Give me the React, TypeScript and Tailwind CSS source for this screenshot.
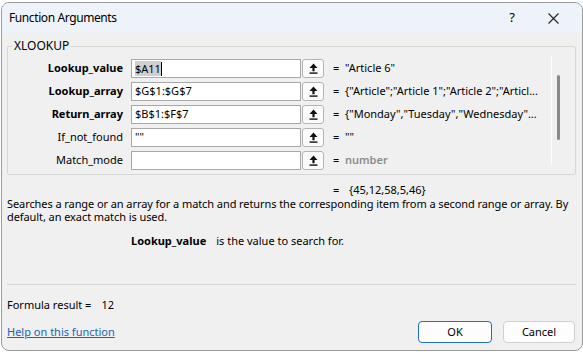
import React from 'react';

type Arg = {
  label: string;
  bold: boolean;
  value: string;
  result: string;
  hint?: boolean;
  selected?: boolean;
};

const args: Arg[] = [
  { label: 'Lookup_value', bold: true, value: '$A11', result: '"Article 6"', selected: true },
  { label: 'Lookup_array', bold: true, value: '$G$1:$G$7', result: '{"Article";"Article 1";"Article 2";"Articl...' },
  { label: 'Return_array', bold: true, value: '$B$1:$F$7', result: '{"Monday","Tuesday","Wednesday"...' },
  { label: 'If_not_found', bold: false, value: '""', result: '""' },
  { label: 'Match_mode', bold: false, value: '', result: 'number', hint: true },
];

function CollapseIcon() {
  return (
    <svg width="9" height="11" viewBox="0 0 9 11">
      <path d="M4.5 0.5 L8.5 5 L5.6 5 L5.6 8.2 L3.4 8.2 L3.4 5 L0.5 5 Z" fill="#111" />
      <rect x="0.5" y="9.4" width="8" height="1.4" fill="#111" />
    </svg>
  );
}

function ArgRow({ arg }: { arg: Arg }) {
  return (
    <div className="flex items-center h-[19px]">
      <div className={`w-[116px] text-right pr-[1px] ${arg.bold ? 'font-bold' : ''}`}>{arg.label}</div>
      <div className="ml-[7px] w-[170px] h-[19px] bg-white border border-[#a8a8a8] flex items-center pl-[3px]">
        {arg.selected ? (
          <span className="flex items-center">
            <span className="bg-[#cfcfcf] leading-[15px]">{arg.value}</span>
            <span className="w-px h-[14px] bg-black" />
          </span>
        ) : (
          <span>{arg.value}</span>
        )}
      </div>
      <div className="ml-[1px] w-[22px] h-[19px] bg-[#fbfbfb] border border-[#b4b4b4] rounded-[3px] flex items-center justify-center">
        <CollapseIcon />
      </div>
      <div className="ml-[9px] w-[12px]">=</div>
      <div className={arg.hint ? 'text-[#8c8c8c] font-semibold' : ''}>{arg.result}</div>
    </div>
  );
}

export default function App() {
  return (
    <div className="w-[583px] h-[352px] bg-white overflow-hidden font-['Noto_Sans',sans-serif] text-[11px] text-black">
      <div className="mt-[2px] ml-[1px] w-[582px] h-[349px] border border-[#9c9c9c] rounded-[8px] bg-[#f0f0f0] overflow-hidden flex flex-col">
        <div className="h-[30px] shrink-0 bg-[#eef3f9] flex items-center pl-[7px] text-[12px]">
          <span className="tracking-[-0.4px]">Function Arguments</span>
          <span className="ml-auto text-[13px]">?</span>
          <svg className="ml-[33px] mr-[23px]" width="11" height="11" viewBox="0 0 11 11">
            <path d="M0.5 0.5 L10.5 10.5 M10.5 0.5 L0.5 10.5" stroke="#222" strokeWidth="1.1" />
          </svg>
        </div>

        <div className="relative shrink-0 mt-[13px] ml-[5px] w-[569px] h-[129px] border border-[#d6d6d6] rounded-[2px] flex">
          <span className="absolute -top-[9px] left-[4px] px-[2px] bg-[#f0f0f0] text-[12px] leading-[16px]">XLOOKUP</span>
          <div className="flex-1 pt-[12px] flex flex-col gap-[4px]">
            {args.map((a) => (
              <ArgRow key={a.label} arg={a} />
            ))}
          </div>
          <div className="w-[24px] my-[9px] border-l border-white">
            <div className="ml-[5px] mt-[19px] w-[3px] h-[65px] rounded-full bg-[#8a8a8a]" />
          </div>
        </div>

        <div className="mt-[8px] ml-[331px] flex leading-[13px]">
          <span className="w-[16px]">=</span>
          <span>{'{45,12,58,5,46}'}</span>
        </div>
        <p className="mt-[1px] ml-[5px] mr-[3px] leading-[13px] tracking-[-0.08px]">
          Searches a range or an array for a match and returns the corresponding item from a second range or array. By
          default, an exact match is used.
        </p>
        <div className="mt-[11px] ml-[129px] flex leading-[13px]">
          <span className="font-bold">Lookup_value</span>
          <span className="ml-[10px]">is the value to search for.</span>
        </div>

        <div className="mt-[37px] ml-[5px] w-[569px] h-px shrink-0 bg-[#d7d7d7]" />

        <div className="mt-[13px] ml-[5px] flex leading-[13px]">
          <span>Formula result =</span>
          <span className="ml-[10px]">12</span>
        </div>

        <div className="mt-[10px] ml-[5px] mr-[7px] flex items-center">
          <span className="text-[#1c63b7] underline">Help on this function</span>
          <button className="ml-auto w-[74px] h-[22px] bg-[#fdfdfd] border border-[#1f6fc5] rounded-[4px]">OK</button>
          <button className="ml-[11px] w-[72px] h-[22px] bg-[#fdfdfd] border border-[#d0d0d0] rounded-[4px]">Cancel</button>
        </div>
      </div>
    </div>
  );
}
